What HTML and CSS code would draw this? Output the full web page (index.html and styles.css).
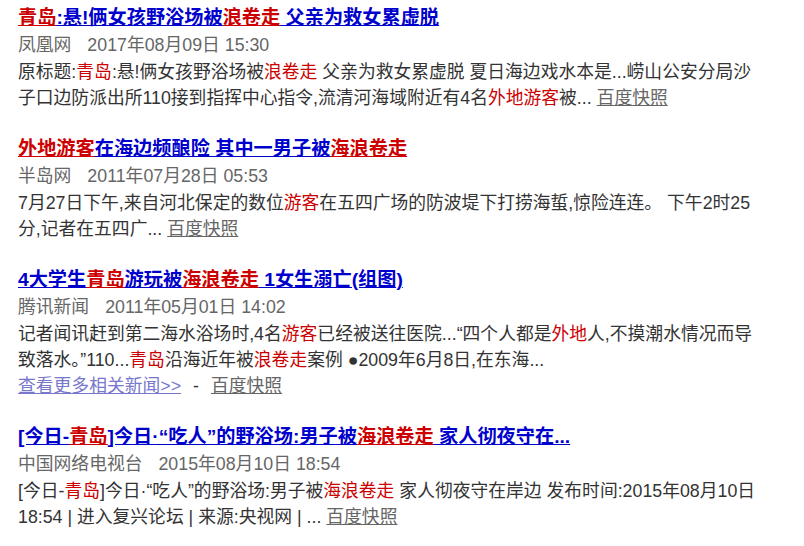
FILE: index.html
```html
<!DOCTYPE html>
<html lang="zh-CN">
<head>
    <meta charset="UTF-8">
    <meta name="viewport" content="width=device-width, initial-scale=1.0">
    <link rel="stylesheet" href="styles.css">
</head>
<body>

<div class="results">
    <!-- result 1 -->
    <div class="result">
        <h3 class="c-title"><a href="#"><em>青岛</em>:悬!俩女孩野浴场被<em>浪卷走</em> 父亲为救女累虚脱</a></h3>
        <p class="c-author"><span class="src">凤凰网</span>2017年08月09日 15:30</p>
        <div class="c-summary">原标题:<em>青岛</em>:悬!俩女孩野浴场被<em>浪卷走</em> 父亲为救女累虚脱 夏日海边戏水本是...崂山公安分局沙子口边防派出所110接到指挥中心指令,流清河海域附近有4名<em>外地游客</em>被... <a class="c-cache" href="#">百度快照</a></div>
    </div>

    <!-- result 2 -->
    <div class="result">
        <h3 class="c-title"><a href="#"><em>外地游客</em>在海边频酿险 其中一男子被<em>海浪卷走</em></a></h3>
        <p class="c-author"><span class="src">半岛网</span>2011年07月28日 05:53</p>
        <div class="c-summary">7月27日下午,来自河北保定的数位<em>游客</em>在五四广场的防波堤下打捞海蜇,惊险连连。 下午2时25分,记者在五四广... <a class="c-cache" href="#">百度快照</a></div>
    </div>

    <!-- result 3 -->
    <div class="result">
        <h3 class="c-title"><a href="#">4大学生<em>青岛</em>游玩被<em>海浪卷走</em> 1女生溺亡(组图)</a></h3>
        <p class="c-author"><span class="src">腾讯新闻</span>2011年05月01日 14:02</p>
        <div class="c-summary">记者闻讯赶到第二海水浴场时,4名<em>游客</em>已经被送往医院...“四个人都是<em>外地</em>人,不摸潮水情况而导致落水。”110...<em>青岛</em>沿海近年被<em>浪卷走</em>案例 ●2009年6月8日,在东海...</div>
        <div class="c-more"><a class="more-link" href="#">查看更多相关新闻&gt;&gt;</a><span class="sep">-</span><a class="c-cache" href="#">百度快照</a></div>
    </div>

    <!-- result 4 -->
    <div class="result">
        <h3 class="c-title"><a href="#">[今日-<em>青岛</em>]今日·“吃人”的野浴场:男子被<em>海浪卷走</em> 家人彻夜守在...</a></h3>
        <p class="c-author"><span class="src">中国网络电视台</span>2015年08月10日 18:54</p>
        <div class="c-summary">[今日-<em>青岛</em>]今日·“吃人”的野浴场:男子被<em>海浪卷走</em> 家人彻夜守在岸边 发布时间:2015年08月10日 18:54 | 进入复兴论坛 | 来源:央视网 | ... <a class="c-cache" href="#">百度快照</a></div>
    </div>
</div>

</body>
</html>
```

FILE: styles.css
```css
body {
    margin: 0;
    padding: 4px 18px;
    background: #fff;
    font-family: "Liberation Sans", Arial, "Noto Sans CJK SC", sans-serif;
    font-size: 17.8px;
    color: #333;
}

.results {
    width: 745px;
}

.result {
    margin-bottom: 24px;
}

.c-title {
    margin: 0;
    font-size: 19.2px;
    line-height: 27px;
    font-weight: bold;
}

.c-title a {
    color: #0000cc;
    text-decoration: underline;
}

.c-title em {
    font-style: normal;
    color: #cc0000;
    text-decoration: underline;
}

.c-author {
    margin: 0;
    padding-top: 1px;
    line-height: 27px;
    color: #666;
}

.c-author .src {
    margin-right: 16px;
}

.c-summary {
    line-height: 26px;
}

.c-summary em {
    font-style: normal;
    color: #cc0000;
}

.c-cache {
    color: #666;
    text-decoration: underline;
}

.c-more {
    line-height: 26px;
}

.more-link {
    color: #7777cc;
    text-decoration: underline;
}

.sep {
    color: #333;
    margin: 0 12px;
}
```
